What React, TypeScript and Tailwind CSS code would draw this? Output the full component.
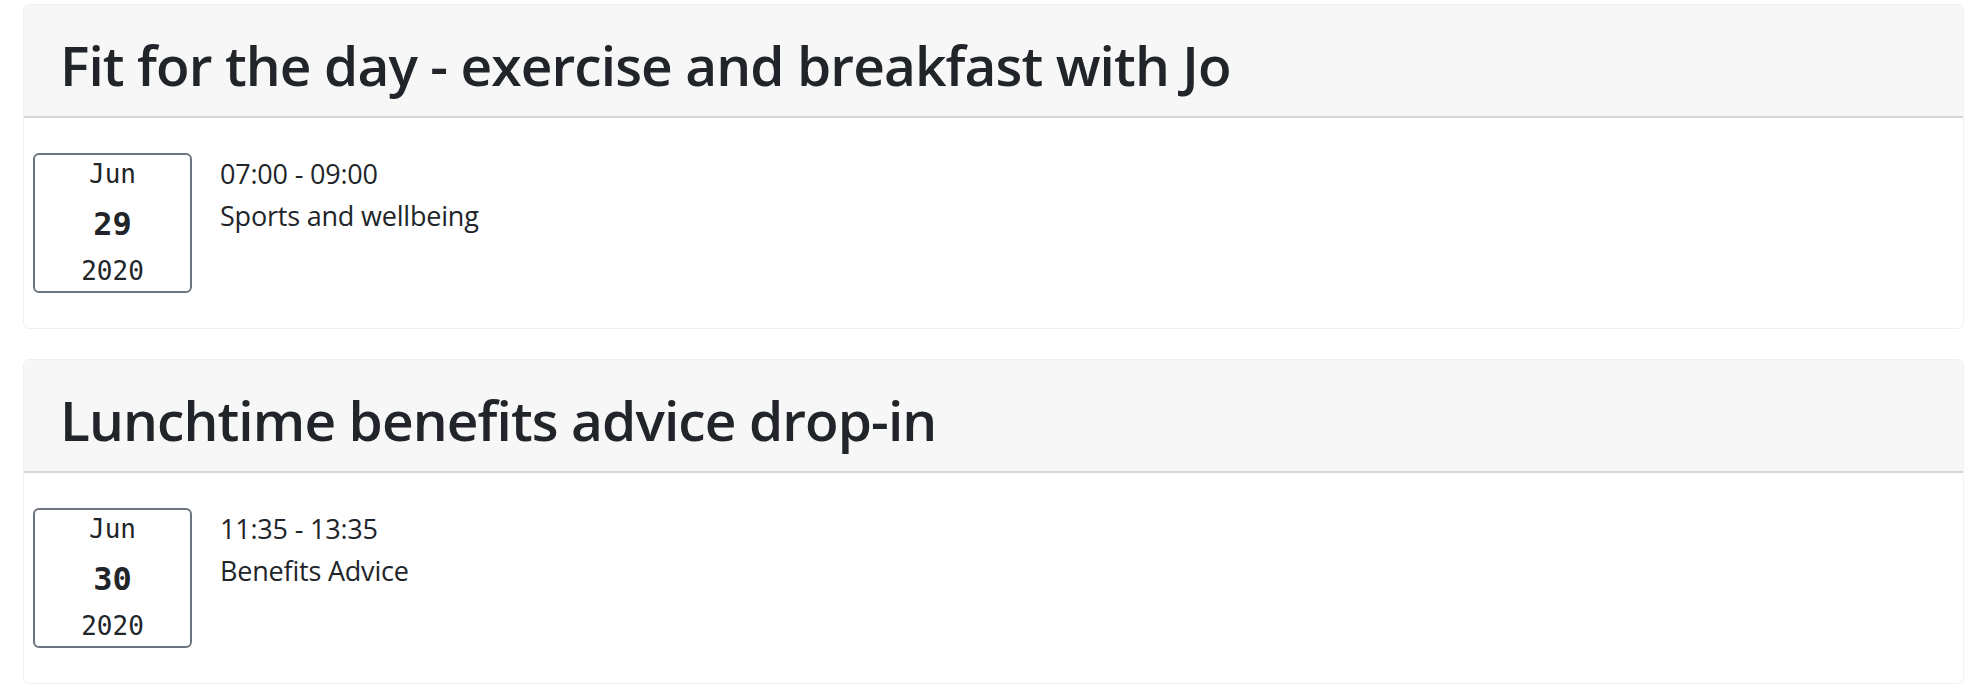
const events = [
  { title: "Fit for the day - exercise and breakfast with Jo", month: "Jun", day: "29", year: "2020", time: "07:00 - 09:00", category: "Sports and wellbeing" },
  { title: "Lunchtime benefits advice drop-in", month: "Jun", day: "30", year: "2020", time: "11:35 - 13:35", category: "Benefits Advice" },
];

function DateBox({ month, day, year }: { month: string; day: string; year: string }) {
  return (
    <div className="w-[159px] h-[140px] shrink-0 border-2 border-[#6c757d] rounded-[6px] text-center text-[#212529] font-['DejaVu_Sans_Mono',monospace]">
      <div className="h-[39px] leading-[39px] text-[26px]">{month}</div>
      <div className="h-[60px] leading-[60px] text-[32px] font-bold">{day}</div>
      <div className="h-[35px] leading-[35px] text-[26px]">{year}</div>
    </div>
  );
}

function EventCard({ ev }: { ev: (typeof events)[number] }) {
  return (
    <div className="ml-[23px] mr-[19px] border border-[#f0f0f0] rounded-[6px] bg-white overflow-hidden">
      <div className="h-[113px] bg-[#f7f7f7] border-b-2 border-[#d6d6d6] pl-[36px] pt-[26px]">
        <h1 className="text-[55px] leading-[67px] font-semibold tracking-[-0.9px] text-[#212529]">{ev.title}</h1>
      </div>
      <div className="flex pt-[35px] pl-[9px] pb-[35px] h-[210px]">
        <DateBox month={ev.month} day={ev.day} year={ev.year} />
        <div className="ml-[28px] text-[27px] leading-[42px] tracking-[-0.2px] text-[#212529]">
          <div>{ev.time}</div>
          <div>{ev.category}</div>
        </div>
      </div>
    </div>
  );
}

export default function App() {
  return (
    <div className="bg-white min-h-screen pt-[4px] font-['Open_Sans',sans-serif] flex flex-col gap-[30px]">
      {events.map((ev) => (
        <EventCard key={ev.title} ev={ev} />
      ))}
    </div>
  );
}
